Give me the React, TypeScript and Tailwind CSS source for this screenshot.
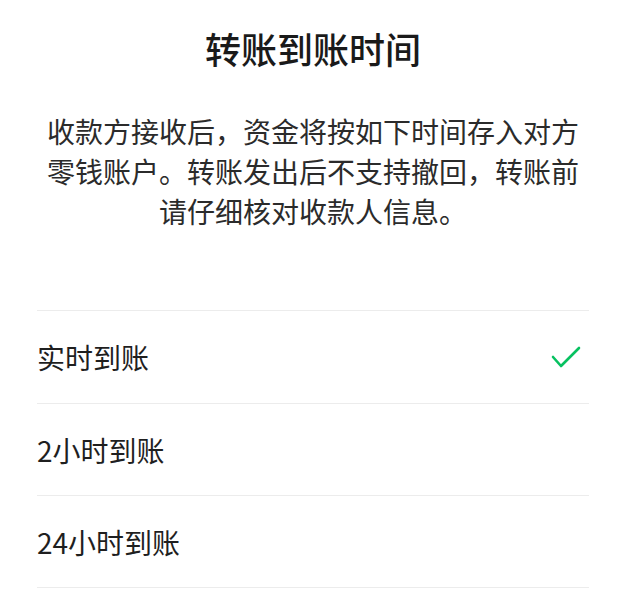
import React from "react";

const rows = [
  { label: "实时到账", checked: true, h: "h-[93px]" },
  { label: "2小时到账", checked: false, h: "h-[92px]" },
  { label: "24小时到账", checked: false, h: "h-[92px]" },
];

export default function App() {
  return (
    <div
      className="w-[641px] h-[592px] bg-white overflow-hidden"
      style={{ fontFamily: '"Noto Sans CJK SC", "Noto Sans", sans-serif' }}
    >
      <div className="ml-[37px] w-[552px]">
        <h1 className="pt-[26px] text-center text-[36px] leading-[44px] font-medium text-[#1a1a1a]">
          转账到账时间
        </h1>
        <p className="mt-[41px] text-center text-[28px] leading-[40px] text-[#2b2b2b]">
          收款方接收后，资金将按如下时间存入对方零钱账户。转账发出后不支持撤回，转账前请仔细核对收款人信息。
        </p>
        <div className="mt-[79px] border-t border-[#ececec]">
          {rows.map((r) => (
            <div
              key={r.label}
              className={`${r.h} flex items-center justify-between border-b border-[#ececec]`}
            >
              <span className="text-[28px] leading-[40px] text-[#1f1f1f]">{r.label}</span>
              {r.checked && (
                <svg width="32" height="24" viewBox="0 0 32 24" className="mr-[7px]">
                  <polyline
                    points="3,12 11,21 29,3"
                    fill="none"
                    stroke="#07c160"
                    strokeWidth="2.6"
                    strokeLinecap="round"
                    strokeLinejoin="round"
                  />
                </svg>
              )}
            </div>
          ))}
        </div>
      </div>
    </div>
  );
}
